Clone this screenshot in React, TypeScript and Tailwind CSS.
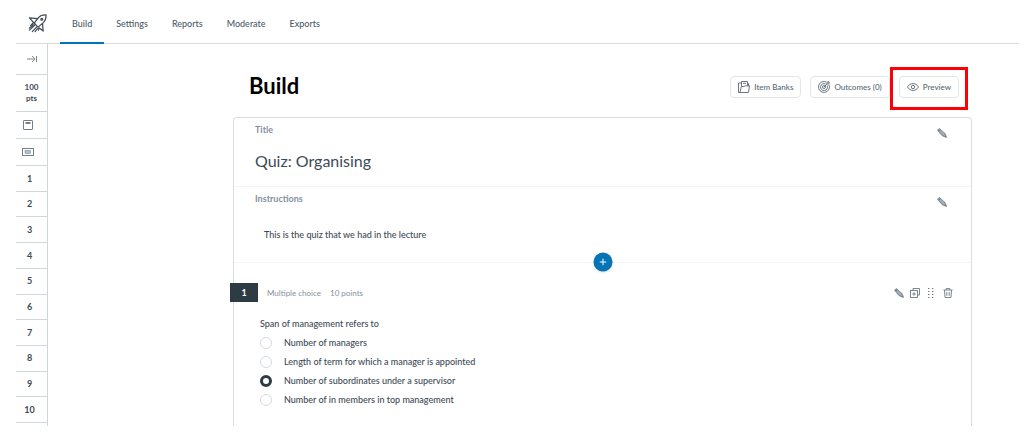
import { ReactNode, useState } from 'react'

interface IIconProps {
  className?: string
}

const tabs = ['Build', 'Settings', 'Reports', 'Moderate', 'Exports']

const questionNumbers = [1, 2, 3, 4, 5, 6, 7, 8, 9, 10]

const choices = [
  'Number of managers',
  'Length of term for which a manager is appointed',
  'Number of subordinates under a supervisor',
  'Number of in members in top management',
]

function RocketIcon({ className }: IIconProps) {
  return (
    <svg
      className={className}
      viewBox="0 0 20 20"
      fill="none"
      stroke="currentColor"
      strokeWidth="1.3"
      strokeLinejoin="round"
      strokeLinecap="round"
    >
      <path d="M6.500 9.500L11 3.800C13 1.500 16 0.800 19 1C19.200 4 18.500 6.500 16.500 8.800L10.500 13.800Z" />
      <path d="M10 4.900L1.500 4L6 9L2.800 12L6.500 11.300" />
      <path d="M15.300 10L16 18L11.500 14.500L11 17" />
      <circle cx="14.500" cy="5.500" r="1" />
      <path d="M7 12L1.500 17M9 13.800L4.500 18.500M5 12L1.500 14.800M10 15.500L7.500 18.500" />
    </svg>
  )
}

function CollapseIcon({ className }: IIconProps) {
  return (
    <svg className={className} viewBox="0 0 12 10" fill="none" stroke="currentColor">
      <path d="M1 5H9M6 2L9 5L6 8M10.500 2V8" />
    </svg>
  )
}

function PageIcon({ className }: IIconProps) {
  return (
    <svg className={className} viewBox="0 0 10 12" fill="none" stroke="currentColor">
      <rect x="0.500" y="1.500" width="9" height="9" rx="0.500" />
      <path d="M2.500 4H7.500" strokeWidth="2" />
    </svg>
  )
}

function CardIcon({ className }: IIconProps) {
  return (
    <svg className={className} viewBox="0 0 12 8" fill="none" stroke="currentColor">
      <rect x="0.500" y="0.500" width="11" height="7" />
      <rect x="3" y="2.500" width="5.500" height="3" fill="currentColor" fillOpacity="0.500" strokeWidth="0.500" />
    </svg>
  )
}

function FolderIcon({ className }: IIconProps) {
  return (
    <svg
      className={className}
      viewBox="0 0 12 12"
      fill="none"
      stroke="currentColor"
      strokeWidth="0.900"
      strokeLinejoin="round"
    >
      <path d="M2 11.500H0.500V2H3.500M10.500 5V2.500H9.500M2 11.500L3.300 5.500H6L7 4.800H11.500L10.500 11.500Z" />
      <path d="M3.500 5V0.500H9.500V4.500M5 2.300H8" />
    </svg>
  )
}

function TargetIcon({ className }: IIconProps) {
  return (
    <svg className={className} viewBox="0 0 12 12" fill="none" stroke="currentColor" strokeWidth="0.900">
      <path d="M8.600 1.100A5.500 5.500 0 1 0 11 3.700" />
      <path d="M7.700 3A3.500 3.500 0 1 0 9.200 4.600" />
      <circle cx="6" cy="6" r="1.500" />
      <path d="M6 6L9 3M9 3V1.500L10.500 0.500V1.600L11.600 1.700L10.500 3.200Z" />
    </svg>
  )
}

function EyeIcon({ className }: IIconProps) {
  return (
    <svg className={className} viewBox="0 0 12 8" fill="none" stroke="currentColor" strokeWidth="0.900">
      <path d="M0.500 4C3.200 -0.600 8.800 -0.600 11.500 4C8.800 8.600 3.200 8.600 0.500 4Z" />
      <circle cx="6" cy="4" r="1.700" />
    </svg>
  )
}

function PencilIcon({ className }: IIconProps) {
  return (
    <svg className={className} viewBox="0 0 10 10">
      <path
        d="M0.500 2.200L2.200 0.500L7.800 5.200L9.600 9.500L5.200 7.800Z"
        fill="#9aa3ab"
        stroke="#6c7782"
        strokeWidth="0.700"
        strokeLinejoin="round"
      />
      <path d="M1.500 3.200L3.200 1.500M7.800 9L9 7.800" stroke="#56626d" strokeWidth="0.800" />
      <path d="M3.500 3.300L7 6.500" stroke="#c5cbd0" strokeWidth="0.600" />
    </svg>
  )
}

function DuplicateIcon({ className }: IIconProps) {
  return (
    <svg className={className} viewBox="0 0 10 10" fill="none" stroke="currentColor" strokeWidth="0.900">
      <path d="M3 2.500V0.500H9.500V7H7.500" />
      <rect x="0.500" y="2.500" width="7" height="7" />
      <path d="M4 4.200V7.800M2.200 6H5.800" />
    </svg>
  )
}

function DragIcon({ className }: IIconProps) {
  return (
    <svg className={className} viewBox="0 0 6 10" fill="currentColor">
      {[0, 3, 6, 9].map((y) => (
        <g key={y}>
          <rect x="0" y={y} width="1.400" height="1" />
          <rect x="4" y={y} width="1.400" height="1" />
        </g>
      ))}
    </svg>
  )
}

function TrashIcon({ className }: IIconProps) {
  return (
    <svg className={className} viewBox="0 0 10 10" fill="none" stroke="currentColor" strokeWidth="0.900">
      <path d="M0.500 2H9.500M3.300 2V0.500H6.700V2M1.500 2L2 9.500H8L8.500 2M3.800 4V7.800M6.200 4V7.800" />
    </svg>
  )
}

function ToolbarButton({ icon, children }: { icon: ReactNode; children: ReactNode }) {
  return (
    <button className="flex h-[22px] items-center gap-1 rounded-sm border border-[#e3e6e9] px-[7px] text-[8px] font-medium whitespace-nowrap text-[#5b6874]">
      {icon}
      {children}
    </button>
  )
}

function Sidebar() {
  return (
    <aside className="w-8 shrink-0 border-r border-[#d0d7dc] pb-[3px] text-[#3d4a56]">
      <button
        aria-label="Collapse sidebar"
        className="flex h-[31px] w-full items-center justify-center border-b border-[#d0d7dc]"
      >
        <CollapseIcon className="h-[10px] w-3 text-[#7d8791]" />
      </button>
      <div className="flex h-[37px] flex-col items-center justify-center border-b border-[#d0d7dc] text-[8px] leading-[11px] font-bold">
        <span>100</span>
        <span>pts</span>
      </div>
      <button
        aria-label="Quiz title"
        className="flex h-[27px] w-full items-center justify-center border-b border-[#d0d7dc] pr-2"
      >
        <PageIcon className="h-3 w-[10px] text-[#737e88]" />
      </button>
      <button
        aria-label="Instructions"
        className="flex h-[27px] w-full items-center justify-center border-b border-[#d0d7dc] pr-2"
      >
        <CardIcon className="h-2 w-3 text-[#737e88]" />
      </button>
      <ol className="grid h-[257px] auto-rows-fr">
        {questionNumbers.map((number) => (
          <li key={number} className="border-b border-[#d0d7dc]">
            <a
              href={`#question-${number}`}
              className="flex h-full items-center justify-center pr-1 text-[9px] font-bold"
            >
              {number}
            </a>
          </li>
        ))}
      </ol>
    </aside>
  )
}

function Question() {
  const [selected, setSelected] = useState(2)

  return (
    <section id="question-1" className="pt-5">
      <div className="flex items-center justify-between pr-[18px]">
        <div className="-ml-1 flex items-center text-[8px] text-[#84909b]">
          <span className="mr-[9px] flex h-[19px] w-7 items-center justify-center bg-[#2d3b45] text-[9px] font-bold text-white">
            1
          </span>
          <span className="mr-[9px]">Multiple choice</span>
          <span>10 points</span>
        </div>
        <div className="flex items-center text-[#6c7883]">
          <button aria-label="Edit question" className="mr-[6px]">
            <PencilIcon className="size-[10px]" />
          </button>
          <button aria-label="Duplicate question" className="mr-2">
            <DuplicateIcon className="size-[10px]" />
          </button>
          <button aria-label="Move question" className="mr-[9px]">
            <DragIcon className="h-[10px] w-[6px]" />
          </button>
          <button aria-label="Delete question">
            <TrashIcon className="size-[10px]" />
          </button>
        </div>
      </div>

      <fieldset className="mt-3 pl-[26px] text-[9px] leading-[19px] font-medium text-[#3d4a56]">
        <legend>Span of management refers to</legend>
        {choices.map((choice, index) => (
          <label key={choice} className="flex items-center gap-3">
            <input
              type="radio"
              name="question-1"
              checked={selected === index}
              onChange={() => setSelected(index)}
              className="size-3 shrink-0 appearance-none rounded-full border border-[#d5dadf] bg-white checked:border-[3px] checked:border-[#2d3b45]"
            />
            {choice}
          </label>
        ))}
      </fieldset>
    </section>
  )
}

export default function App() {
  const [currentTab, setCurrentTab] = useState('Build')

  return (
    <div className="bg-white pr-[5px] pl-4 font-['Lato',sans-serif]">
      <header className="flex h-11 border-b border-[#d5dadf]">
        <div className="flex w-11 items-center pt-1 pl-3">
          <RocketIcon className="size-[19px] text-[#3d4a56]" />
        </div>
        <nav className="flex">
          {tabs.map((tab) => (
            <button
              key={tab}
              aria-current={currentTab === tab ? 'page' : undefined}
              onClick={() => setCurrentTab(tab)}
              className="-mb-px border-b-2 border-transparent px-3 pt-[6px] text-[9px] font-medium text-[#4f5c68] aria-[current=page]:border-[#0374b5]"
            >
              {tab}
            </button>
          ))}
        </nav>
      </header>

      <div className="flex">
        <Sidebar />

        <main className="flex min-w-0 flex-1 flex-col pr-[47px] pl-[185px]">
          <div className="flex items-start justify-between pr-1 pl-4">
            <h1 className="pt-[29px] text-[22px] leading-[26px] font-bold text-black">Build</h1>
            <div className="flex pt-[23px]">
              <div className="flex gap-[9px] pt-[9px]">
                <ToolbarButton icon={<FolderIcon className="size-3" />}>Item Banks</ToolbarButton>
                <ToolbarButton icon={<TargetIcon className="size-3" />}>Outcomes (0)</ToolbarButton>
              </div>
              <div className="h-[43px] border-[3px] border-[#fb0007] px-[6px] pt-[6px]">
                <ToolbarButton icon={<EyeIcon className="h-2 w-3" />}>Preview</ToolbarButton>
              </div>
            </div>
          </div>

          <div className="mt-[7px] flex-1 rounded-t-sm border border-b-0 border-[#d9dee2]">
            <section className="flex h-[69px] items-start justify-between border-b border-[#f4f5f6] pr-6 pl-[21px]">
              <div>
                <h2 className="pt-[6px] text-[9px] leading-3 font-bold text-[#8491a0]">Title</h2>
                <p className="mt-[15px] text-[16px] leading-5 text-[#3d4a56]">Quiz: Organising</p>
              </div>
              <button aria-label="Edit title" className="mt-[10px]">
                <PencilIcon className="size-[10px]" />
              </button>
            </section>

            <section className="relative flex h-[76px] items-start justify-between border-b border-[#f4f5f6] pr-6 pl-[21px]">
              <div>
                <h2 className="pt-[6px] text-[9px] leading-3 font-bold text-[#8491a0]">Instructions</h2>
                <p className="mt-6 pl-[9px] text-[9px] leading-3 font-medium text-[#3d4a56]">
                  This is the quiz that we had in the lecture
                </p>
              </div>
              <button aria-label="Edit instructions" className="mt-[10px]">
                <PencilIcon className="size-[10px]" />
              </button>
              <button
                aria-label="Add question"
                className="absolute bottom-0 left-1/2 flex size-[19px] -translate-x-1/2 translate-y-1/2 items-center justify-center rounded-full bg-[#0374b5] shadow-sm"
              >
                <svg className="size-[7px]" viewBox="0 0 7 7" stroke="white">
                  <path d="M3.500 0V7M0 3.500H7" />
                </svg>
              </button>
            </section>

            <Question />
          </div>
        </main>
      </div>
    </div>
  )
}
